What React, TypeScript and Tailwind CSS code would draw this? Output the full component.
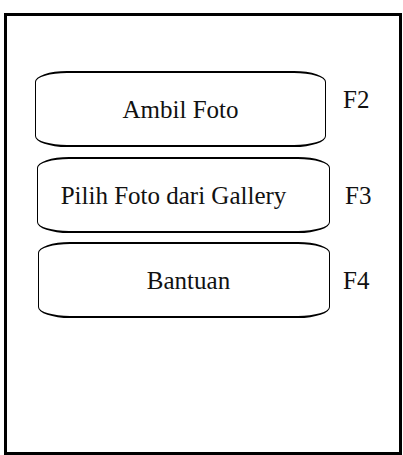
import React from "react";

const serif = { fontFamily: '"Liberation Serif", "Times New Roman", serif' };

type MenuRowProps = {
  label: string;
  fkey: string;
  rowClass: string;
  boxClass: string;
  keyClass: string;
};

function MenuRow({ label, fkey, rowClass, boxClass, keyClass }: MenuRowProps) {
  return (
    <div className={`flex ${rowClass}`}>
      <div
        className={`h-[76px] flex items-center justify-center border-black border-x-[1.5px] border-y-2 rounded-[32px_/_11px] ${boxClass}`}
      >
        <span className="text-[25px] leading-none text-[#111] whitespace-nowrap">{label}</span>
      </div>
      <span className={`text-[25px] leading-none text-[#111] ${keyClass}`}>{fkey}</span>
    </div>
  );
}

export default function App() {
  return (
    <div className="bg-white min-h-[455px] pl-[4px] pt-[13px]" style={serif}>
      <div className="w-[398px] h-[442px] border-[3px] border-black flex flex-col pt-[55px]">
        <MenuRow
          label="Ambil Foto"
          fkey="F2"
          rowClass="ml-[28px]"
          boxClass="w-[291px]"
          keyClass="ml-[17px] mt-[16px]"
        />
        <MenuRow
          label="Pilih Foto dari Gallery"
          fkey="F3"
          rowClass="ml-[30px] mt-[10px] items-center"
          boxClass="w-[293px] pr-5"
          keyClass="ml-[15px]"
        />
        <MenuRow
          label="Bantuan"
          fkey="F4"
          rowClass="ml-[31px] mt-[9px] items-center"
          boxClass="w-[292px] pl-[9px]"
          keyClass="ml-[13px]"
        />
      </div>
    </div>
  );
}
